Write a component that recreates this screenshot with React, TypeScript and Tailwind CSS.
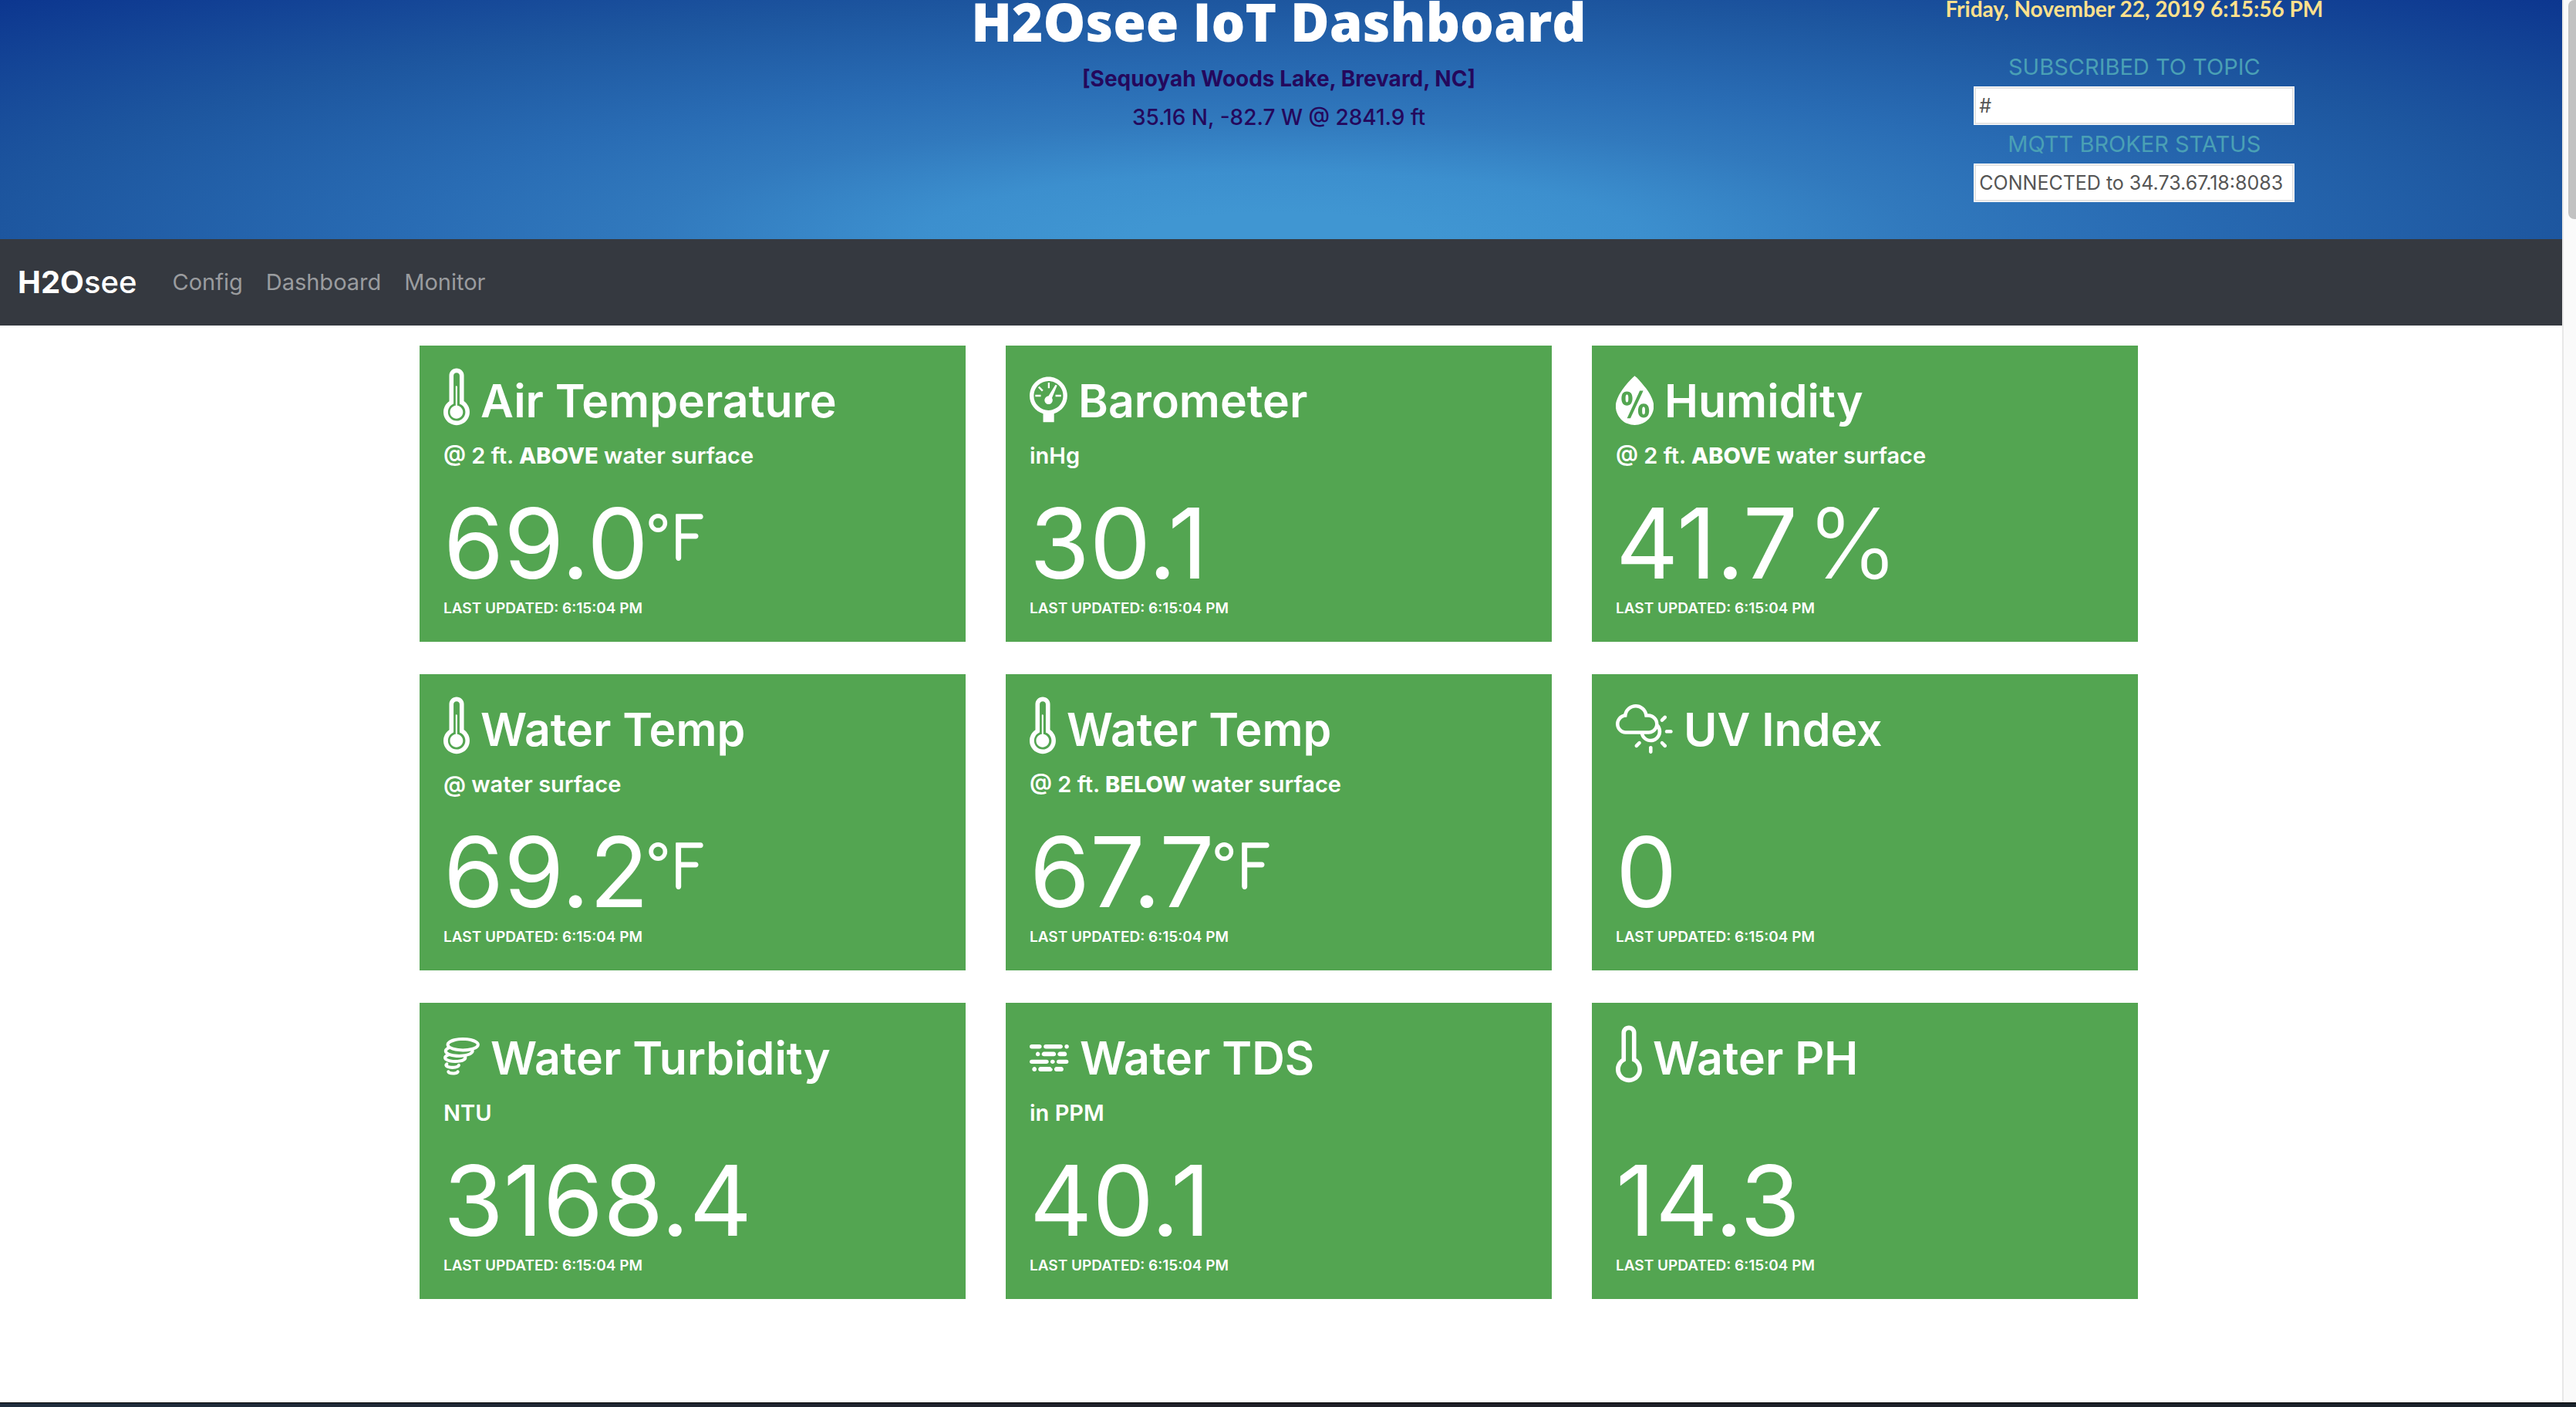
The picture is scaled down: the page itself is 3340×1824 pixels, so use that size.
import type { ReactNode } from "react";
import type { IconType } from "react-icons";
import {
  WiBarometer,
  WiDayCloudyHigh,
  WiDust,
  WiFahrenheit,
  WiHumidity,
  WiThermometer,
  WiThermometerExterior,
  WiTornado,
} from "react-icons/wi";

type Sensor = {
  title: string;
  note?: ReactNode;
  value: string;
  unit?: "F" | "%";
  Icon: IconType;
  viewBox: string;
  iconWidth: string;
};

const thermometerBox = { viewBox: "9.91 0 10.2 30", iconWidth: "w-[34px]" };

const sensors: Sensor[] = [
  {
    title: "Air Temperature",
    note: (
      <>
        @ 2 ft. <b className="font-extrabold">ABOVE</b> water surface
      </>
    ),
    value: "69.0",
    unit: "F",
    Icon: WiThermometer,
    ...thermometerBox,
  },
  {
    title: "Barometer",
    note: "inHg",
    value: "30.1",
    Icon: WiBarometer,
    viewBox: "7.69 0 14.7 30",
    iconWidth: "w-[49px]",
  },
  {
    title: "Humidity",
    note: (
      <>
        @ 2 ft. <b className="font-extrabold">ABOVE</b> water surface
      </>
    ),
    value: "41.7",
    unit: "%",
    Icon: WiHumidity,
    viewBox: "7.6 0 14.7 30",
    iconWidth: "w-[49px]",
  },
  {
    title: "Water Temp",
    note: "@ water surface",
    value: "69.2",
    unit: "F",
    Icon: WiThermometer,
    ...thermometerBox,
  },
  {
    title: "Water Temp",
    note: (
      <>
        @ 2 ft. <b className="font-extrabold">BELOW</b> water surface
      </>
    ),
    value: "67.7",
    unit: "F",
    Icon: WiThermometer,
    ...thermometerBox,
  },
  {
    title: "UV Index",
    value: "0",
    Icon: WiDayCloudyHigh,
    viewBox: "3.95 0 22.2 30",
    iconWidth: "w-[74px]",
  },
  {
    title: "Water Turbidity",
    note: "NTU",
    value: "3168.4",
    Icon: WiTornado,
    viewBox: "4.13 -8.15 21.8 46.5",
    iconWidth: "w-[47px]",
  },
  {
    title: "Water TDS",
    note: "in PPM",
    value: "40.1",
    Icon: WiDust,
    viewBox: "7.33 0 15.4 30",
    iconWidth: "w-[51px]",
  },
  {
    title: "Water PH",
    value: "14.3",
    Icon: WiThermometerExterior,
    ...thermometerBox,
  },
];

function SensorCard({ title, note, value, unit, Icon, viewBox, iconWidth }: Sensor) {
  return (
    <article className="bg-[#53a551] px-[31px] pt-[21px] pb-[31px] text-white">
      <h2 className="flex items-start gap-[14px] text-[59px] leading-[102px] font-semibold whitespace-nowrap">
        <Icon viewBox={viewBox} className={`h-[100px] shrink-0 ${iconWidth}`} aria-hidden="true" />
        {title}
      </h2>
      <p className="h-10 text-[29px] leading-10 font-semibold">{note}</p>
      <p className="mt-5 flex items-start text-[126px] leading-[146px]">
        {value}
        {unit === "F" && (
          <WiFahrenheit
            viewBox="9.67 9.2 10.64 9.22"
            className="mt-[35px] h-[61px] w-[71px]"
            aria-label="°F"
          />
        )}
        {unit === "%" && <span className="ml-3 font-light">%</span>}
      </p>
      <p className="text-[19px] leading-6 font-semibold">LAST UPDATED: 6:15:04 PM</p>
    </article>
  );
}

function StatusField({ id, label, value }: { id: string; label: string; value: string }) {
  return (
    <div className="flex flex-col items-center">
      <label htmlFor={id} className="text-[29px] leading-[50px] text-[#4aa0b5]">
        {label}
      </label>
      <input
        id={id}
        type="text"
        readOnly
        defaultValue={value}
        className="h-[50px] w-[416px] border border-white bg-white px-[6px] text-[25px] text-[#555555] shadow-[inset_0_0_0_2px_#e4e4e4]"
      />
    </div>
  );
}

export default function App() {
  return (
    <div className="flex min-h-screen flex-col bg-white font-[Inter,sans-serif]">
      <div className="flex flex-1">
        <div className="min-w-0 flex-1">
          <header className="grid h-[310px] grid-cols-3 gap-3 bg-[radial-gradient(ellipse_farthest-corner_at_50%_100%,#4096d2_0%,#4096d2_8%,#3c8fce_20%,#3179bd_35%,#296cb4_48%,#1d569f_71%,#0c368f_100%)] pr-[6px]">
            <div className="col-start-2 text-center text-[28px] text-[#24085c]">
              <h1 className="mb-6 text-[69px] leading-[54px] font-extrabold whitespace-nowrap text-white font-[Open_Sans,sans-serif]">
                H2Osee IoT Dashboard
              </h1>
              <p className="mb-[2px] leading-[48px] font-bold">[Sequoyah Woods Lake, Brevard, NC]</p>
              <p className="leading-[48px] font-medium">35.16 N, -82.7 W @ 2841.9 ft</p>
            </div>
            <div>
              <p className="mb-10 text-center text-[28px] leading-[22px] font-bold text-[#ffe08c] font-[Lato,sans-serif]">
                Friday, November 22, 2019 6:15:56 PM
              </p>
              <StatusField id="topic" label="SUBSCRIBED TO TOPIC" value="#" />
              <StatusField id="broker" label="MQTT BROKER STATUS" value="CONNECTED to 34.73.67.18:8083" />
            </div>
          </header>

          <nav className="flex h-28 items-center bg-[#353940] pl-[23px]">
            <a href="#home" className="mr-[46px] text-[40px] font-medium text-white">
              <b className="font-bold">H2O</b>see
            </a>
            <div className="flex gap-[30px] text-[29px] text-[#9a9c9f]">
              <a href="#config">Config</a>
              <a href="#dashboard">Dashboard</a>
              <a href="#monitor">Monitor</a>
            </div>
          </nav>

          <main className="pt-[26px] pr-[6px]">
            <div className="mx-auto grid max-w-[2228px] grid-cols-3 gap-x-[52px] gap-y-[42px]">
              {sensors.map((sensor, i) => (
                <SensorCard key={i} {...sensor} />
              ))}
            </div>
          </main>
        </div>

        <div className="w-[18px] overflow-hidden border-l-2 border-[#e8e8e8] bg-[#fafafa] pl-[6px]" aria-hidden="true">
          <div className="h-[284px] w-4 rounded-l-[8px] bg-[#c2c2c2]" />
        </div>
      </div>
      <footer className="h-[6px] border-t border-black bg-linear-to-r from-[#1f2d3d] via-[#1f1f27] to-[#1a222b]" />
    </div>
  );
}
